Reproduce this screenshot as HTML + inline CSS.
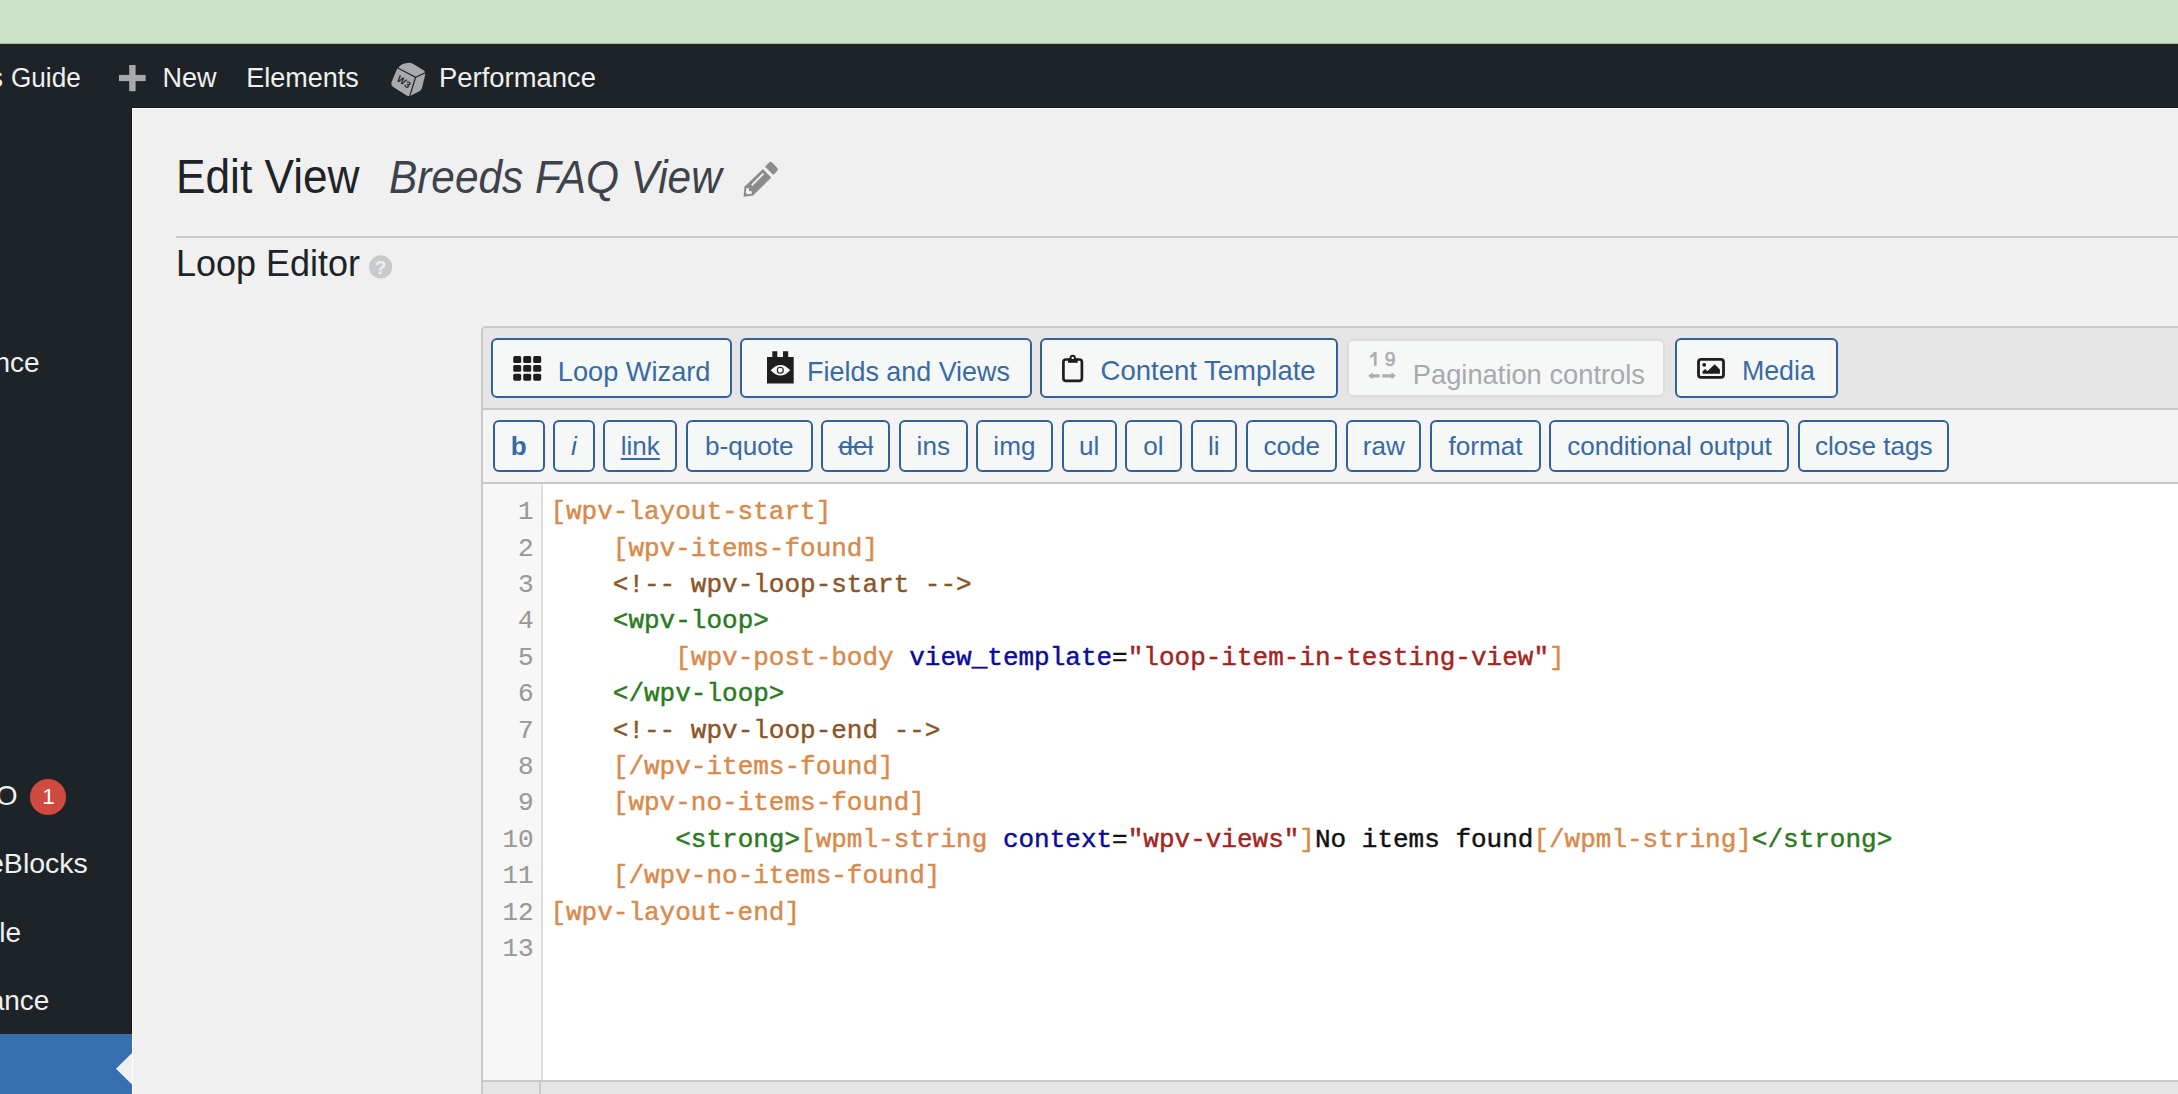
<!DOCTYPE html>
<html><head><meta charset="utf-8">
<style>
html,body{margin:0;padding:0}
body{width:2178px;height:1094px;overflow:hidden;position:relative;background:#f0f0f1;font-family:"Liberation Sans",sans-serif}
.a{position:absolute}
.t{position:absolute;white-space:pre;line-height:1}
.btn{position:absolute;box-sizing:border-box;border:2px solid #33609a;border-radius:6px;background:#f6f7f7}
.dis{border-color:#dcdcde;background:#f6f7f7}
.code{font-family:"Liberation Mono",monospace}
.o{color:#d88a4b}.c{color:#8a5628}.g{color:#2b7a1f}.b{color:#0b0b99}.s{color:#a3241f}.k{color:#111}
</style></head>
<body>

<div class="a" style="left:0;top:0;width:2178px;height:43px;background:#c9e1c5"></div>
<div class="a" style="left:0;top:43px;width:2178px;height:1px;background:#a8bfa4"></div>
<div class="a" style="left:0;top:44px;width:2178px;height:64px;background:#1d2327"></div>
<div class="a" style="left:0;top:108px;width:132px;height:986px;background:#1d2327"></div>
<div class="a" style="left:0;top:1034px;width:132px;height:60px;background:#386fb0"></div>
<div class="a" style="left:131px;top:107px;width:2047px;height:1px;background:#141719"></div>
<div class="a" style="left:131px;top:107px;width:1px;height:927px;background:#141719"></div>
<div class="a" style="left:132px;top:108px;width:2046px;height:1px;background:#fdfdfd"></div>
<div class="a" style="left:132px;top:108px;width:1px;height:986px;background:#fdfdfd"></div>
<svg class="a" style="left:116px;top:1052px" width="16" height="34" viewBox="0 0 16 34"><polygon points="16.5,0.5 0,16.7 16.5,33" fill="#f0f0f1"/></svg>
<div class="t" style="left:-10.50px;top:64.75px;font-size:27px;color:#f0f0f1;">s</div>
<div class="t" style="left:10.60px;top:64.75px;font-size:27px;color:#f0f0f1;transform:scaleX(0.967);transform-origin:0 0;">Guide</div>
<svg class="a" style="left:119px;top:65px" width="27" height="27" viewBox="0 0 27 27"><rect x="10.2" y="0" width="6.4" height="26.2" fill="#a7aaad"/><rect x="0" y="9.9" width="26.6" height="6.2" fill="#a7aaad"/></svg>
<div class="t" style="left:162.60px;top:64.75px;font-size:27px;color:#f0f0f1;">New</div>
<div class="t" style="left:246.30px;top:64.75px;font-size:27px;color:#f0f0f1;">Elements</div>
<svg class="a" style="left:385px;top:58px" width="45" height="42" viewBox="0 0 45 42">
<path d="M14 9 Q16 6.5 19.5 5.6 L23.5 4.8 Q25.5 4.6 27.5 5.6 L38.5 12.2 Q40.8 13.8 40.2 16.5 L37 30 Q36.3 32.3 34 33.4 L26 37.6 Q23.8 38.6 21.6 37.4 L8.6 29.2 Q5.8 27.4 6.4 24.6 L11.4 12.4 Q12.2 10.4 14 9 Z" fill="#a7aaad"/>
<path d="M12.8 10 L30.6 19.3 L40.3 14.8 M30.6 19.3 L24.8 37.9" stroke="#1d2327" stroke-width="1.2" fill="none"/>
<text x="0" y="0" font-family="Liberation Sans" font-weight="bold" font-size="9.6" fill="#1d2327" transform="translate(10.9,22.6) rotate(34)">W3</text>
</svg>
<div class="t" style="left:439.00px;top:64.75px;font-size:27px;color:#f0f0f1;transform:scaleX(1.015);transform-origin:0 0;">Performance</div>
<div class="t" style="right:2138.30px;top:349.20px;font-size:28px;color:#f0f0f1;">nce</div>
<div class="t" style="right:2160.40px;top:782.00px;font-size:28px;color:#f0f0f1;">O</div>
<div class="a" style="left:29.7px;top:778.8px;width:36.3px;height:36.3px;border-radius:50%;background:#cf4a3f"></div>
<div class="t" style="left:42.30px;top:785.67px;font-size:22.5px;color:#fff;">1</div>
<div class="t" style="right:2090.20px;top:849.37px;font-size:28.5px;color:#f0f0f1;">eBlocks</div>
<div class="t" style="right:2157.00px;top:919.00px;font-size:28px;color:#f0f0f1;">le</div>
<div class="t" style="right:2128.60px;top:987.00px;font-size:28px;color:#f0f0f1;">ance</div>
<div class="t" style="left:175.60px;top:153.00px;font-size:48px;color:#1d2327;transform:scaleX(0.921);transform-origin:0 0;">Edit View</div>
<div class="t" style="left:388.90px;top:154.67px;font-size:45.8px;color:#3c434a;transform:scaleX(0.925);transform-origin:0 0;font-style:italic;">Breeds FAQ View</div>
<svg class="a" style="left:738px;top:157px" width="45" height="45" viewBox="0 0 45 45">
<path d="M27.1 9.7 L31.2 5.3 Q32.5 4.2 33.8 5.3 L39.4 11 Q40.5 12.3 39.4 13.6 L35.4 17.9 Z" fill="#8c8c8c"/>
<path d="M24.9 11.9 L33.3 20.4 L15.2 38.5 L5.6 39.8 L6.4 29.8 Z" fill="#8c8c8c"/>
<path d="M13.8 28.4 L25.3 16.7" stroke="#f0f0f1" stroke-width="1.9"/>
<path d="M8.4 30.9 L10.9 31.2 L11.1 33.9 L13.8 34.3 L14 36.6 L9.6 37.4 L7.7 35.4 Z" fill="#f0f0f1"/>
</svg>
<div class="a" style="left:176px;top:236px;width:2002px;height:2px;background:#c8c9cb"></div>
<div class="t" style="left:175.50px;top:244.91px;font-size:37.4px;color:#1d2327;transform:scaleX(0.9615);transform-origin:0 0;">Loop Editor</div>
<svg class="a" style="left:368px;top:254px" width="26" height="26" viewBox="0 0 26 26"><circle cx="12.6" cy="12.9" r="11.6" fill="#c9cacc"/><text x="12.6" y="20" text-anchor="middle" font-family="Liberation Sans" font-weight="bold" font-size="19" fill="#f0f0f1">?</text></svg>
<div class="a" style="left:481px;top:326px;width:1760px;height:820px;box-sizing:border-box;border:2px solid #c9c9c9;border-radius:5px;background:#fff"></div>
<div class="a" style="left:483px;top:328px;width:1700px;height:80px;background:#e5e5e5;border-top-left-radius:3px"></div>
<div class="a" style="left:483px;top:408px;width:1700px;height:2px;background:#c9c9c9"></div>
<div class="a" style="left:483px;top:410px;width:1700px;height:72px;background:#f4f4f4"></div>
<div class="a" style="left:483px;top:482px;width:1700px;height:2px;background:#c9c9c9"></div>
<div class="a" style="left:483px;top:484px;width:58px;height:596px;background:#f7f7f7"></div>
<div class="a" style="left:541px;top:484px;width:2px;height:596px;background:#dddddd"></div>
<div class="a" style="left:483px;top:1080px;width:1700px;height:2px;background:#c9c9c9"></div>
<div class="a" style="left:483px;top:1082px;width:1700px;height:12px;background:#e5e5e5"></div>
<div class="a" style="left:539px;top:1082px;width:2px;height:12px;background:#c9c9c9"></div>
<div class="btn" style="left:491.0px;top:338.0px;width:240.5px;height:59.7px"></div>
<div class="btn" style="left:739.7px;top:338.0px;width:292.1px;height:59.7px"></div>
<div class="btn" style="left:1040.1px;top:338.0px;width:297.8px;height:59.7px"></div>
<div class="btn dis" style="left:1347.0px;top:339.2px;width:318.4px;height:57.5px"></div>
<div class="btn" style="left:1675.3px;top:338.0px;width:162.3px;height:59.7px"></div>
<svg class="a" style="left:513px;top:356px" width="30" height="26" viewBox="0 0 30 26"><rect x="0.2" y="0.10" width="8" height="6.9" rx="1.6" fill="#1e1e1e"/><rect x="0.2" y="8.95" width="8" height="6.9" rx="1.6" fill="#1e1e1e"/><rect x="0.2" y="17.80" width="8" height="6.9" rx="1.6" fill="#1e1e1e"/><rect x="10.2" y="0.10" width="8" height="6.9" rx="1.6" fill="#1e1e1e"/><rect x="10.2" y="8.95" width="8" height="6.9" rx="1.6" fill="#1e1e1e"/><rect x="10.2" y="17.80" width="8" height="6.9" rx="1.6" fill="#1e1e1e"/><rect x="20.2" y="0.10" width="8" height="6.9" rx="1.6" fill="#1e1e1e"/><rect x="20.2" y="8.95" width="8" height="6.9" rx="1.6" fill="#1e1e1e"/><rect x="20.2" y="17.80" width="8" height="6.9" rx="1.6" fill="#1e1e1e"/></svg>
<svg class="a" style="left:760px;top:345px" width="40" height="45" viewBox="0 0 40 45">
<path d="M7 11.9 H12.3 V6.2 H17.3 V11.9 H23 V6.2 H28.2 V11.9 H33.7 V38.5 H7 Z" fill="#1e1e1e"/>
<path d="M10.7 25.3 Q20.5 14.8 30.2 25.3 Q20.5 35.8 10.7 25.3 Z" fill="#f6f7f7"/>
<circle cx="20.3" cy="25.3" r="3" fill="none" stroke="#1e1e1e" stroke-width="1.1"/>
</svg>
<svg class="a" style="left:1055px;top:348px" width="35" height="40" viewBox="0 0 35 40">
<rect x="8.4" y="11.5" width="18.5" height="21.4" rx="2.6" fill="none" stroke="#1e1e1e" stroke-width="2.7"/>
<rect x="13" y="10.5" width="9.7" height="4.3" fill="#1e1e1e"/>
<circle cx="17.7" cy="9.9" r="3.1" fill="#1e1e1e"/>
<circle cx="17.7" cy="9.9" r="1.2" fill="#f6f7f7"/>
</svg>
<svg class="a" style="left:1360px;top:345px" width="45" height="43" viewBox="0 0 45 43">
<path d="M13.9 7.1 H16.6 V20.8 H13.9 V10.9 Q12 12.4 10 13 V10.6 Q12.6 9.6 13.9 7.1 Z" fill="#abaeb1"/>
<text x="24.8" y="20.8" font-family="Liberation Sans" font-size="19.5" fill="#abaeb1" stroke="#abaeb1" stroke-width="0.6">9</text>
<path d="M8.3 30.8 L12.6 27.3 L12.6 29.2 H19.7 V32.4 H12.6 V34.3 Z M35.8 30.8 L31.5 27.3 L31.5 29.2 H22.2 V32.4 H31.5 V34.3 Z" fill="#abaeb1"/>
</svg>
<svg class="a" style="left:1690px;top:350px" width="45" height="38" viewBox="0 0 45 38">
<rect x="8.5" y="9.4" width="25" height="18" rx="2.6" fill="none" stroke="#1e1e1e" stroke-width="2.8"/>
<circle cx="14.2" cy="14.8" r="1.9" fill="#1e1e1e"/>
<path d="M12.5 23.8 L12.6 21.2 L15.3 19.1 L17.4 21.2 L24.7 14.2 L29.9 19.4 L29.9 23.8 Z" fill="#1e1e1e"/>
</svg>
<div class="t" style="left:557.80px;top:357.68px;font-size:27.2px;color:#386aa5;">Loop Wizard</div>
<div class="t" style="left:807.10px;top:358.83px;font-size:26.9px;color:#386aa5;">Fields and Views</div>
<div class="t" style="left:1100.60px;top:357.12px;font-size:27.5px;color:#386aa5;">Content Template</div>
<div class="t" style="left:1412.80px;top:360.50px;font-size:27.3px;color:#a7aaad;">Pagination controls</div>
<div class="t" style="left:1741.90px;top:358.02px;font-size:26.8px;color:#386aa5;">Media</div>
<div class="btn" style="left:493.1px;top:420.0px;width:51.5px;height:51.7px"></div>
<div class="t" style="left:493.1px;width:51.5px;text-align:center;top:433.01px;font-size:26.1px;color:#386aa5;font-weight:bold;">b</div>
<div class="btn" style="left:553.2px;top:420.0px;width:41.4px;height:51.7px"></div>
<div class="t" style="left:553.2px;width:41.4px;text-align:center;top:433.01px;font-size:26.1px;color:#386aa5;font-style:italic;">i</div>
<div class="btn" style="left:603.2px;top:420.0px;width:74.2px;height:51.7px"></div>
<div class="t" style="left:603.2px;width:74.2px;text-align:center;top:433.01px;font-size:26.1px;color:#386aa5;text-decoration:underline;text-decoration-thickness:2px;text-underline-offset:3px;">link</div>
<div class="btn" style="left:686.1px;top:420.0px;width:126.5px;height:51.7px"></div>
<div class="t" style="left:686.1px;width:126.5px;text-align:center;top:433.01px;font-size:26.1px;color:#386aa5;">b-quote</div>
<div class="btn" style="left:821.4px;top:420.0px;width:68.9px;height:51.7px"></div>
<div class="t" style="left:821.4px;width:68.9px;text-align:center;top:433.01px;font-size:26.1px;color:#386aa5;text-decoration:line-through;text-decoration-thickness:2px;">del</div>
<div class="btn" style="left:899.0px;top:420.0px;width:68.6px;height:51.7px"></div>
<div class="t" style="left:899.0px;width:68.6px;text-align:center;top:433.01px;font-size:26.1px;color:#386aa5;">ins</div>
<div class="btn" style="left:976.2px;top:420.0px;width:76.4px;height:51.7px"></div>
<div class="t" style="left:976.2px;width:76.4px;text-align:center;top:433.01px;font-size:26.1px;color:#386aa5;">img</div>
<div class="btn" style="left:1061.6px;top:420.0px;width:55.0px;height:51.7px"></div>
<div class="t" style="left:1061.6px;width:55.0px;text-align:center;top:433.01px;font-size:26.1px;color:#386aa5;">ul</div>
<div class="btn" style="left:1125.2px;top:420.0px;width:56.4px;height:51.7px"></div>
<div class="t" style="left:1125.2px;width:56.4px;text-align:center;top:433.01px;font-size:26.1px;color:#386aa5;">ol</div>
<div class="btn" style="left:1190.6px;top:420.0px;width:46.5px;height:51.7px"></div>
<div class="t" style="left:1190.6px;width:46.5px;text-align:center;top:433.01px;font-size:26.1px;color:#386aa5;">li</div>
<div class="btn" style="left:1246.0px;top:420.0px;width:91.4px;height:51.7px"></div>
<div class="t" style="left:1246.0px;width:91.4px;text-align:center;top:433.01px;font-size:26.1px;color:#386aa5;">code</div>
<div class="btn" style="left:1346.3px;top:420.0px;width:75.2px;height:51.7px"></div>
<div class="t" style="left:1346.3px;width:75.2px;text-align:center;top:433.01px;font-size:26.1px;color:#386aa5;">raw</div>
<div class="btn" style="left:1430.4px;top:420.0px;width:110.4px;height:51.7px"></div>
<div class="t" style="left:1430.4px;width:110.4px;text-align:center;top:433.01px;font-size:26.1px;color:#386aa5;">format</div>
<div class="btn" style="left:1549.4px;top:420.0px;width:240.1px;height:51.7px"></div>
<div class="t" style="left:1549.4px;width:240.1px;text-align:center;top:433.01px;font-size:26.1px;color:#386aa5;">conditional output</div>
<div class="btn" style="left:1798.1px;top:420.0px;width:151.3px;height:51.7px"></div>
<div class="t" style="left:1798.1px;width:151.3px;text-align:center;top:433.01px;font-size:26.1px;color:#386aa5;">close tags</div>
<div class="t code" style="right:1644.3px;top:499.14px;font-size:26px;color:#999;-webkit-text-stroke:0.15px #999">1</div>
<div class="t code" style="left:550.4px;top:499.14px;font-size:26px;-webkit-text-stroke:0.45px currentColor;"><span class="o">[wpv-layout-start]</span></div>
<div class="t code" style="right:1644.3px;top:535.54px;font-size:26px;color:#999;-webkit-text-stroke:0.15px #999">2</div>
<div class="t code" style="left:550.4px;top:535.54px;font-size:26px;-webkit-text-stroke:0.45px currentColor;">    <span class="o">[wpv-items-found]</span></div>
<div class="t code" style="right:1644.3px;top:571.94px;font-size:26px;color:#999;-webkit-text-stroke:0.15px #999">3</div>
<div class="t code" style="left:550.4px;top:571.94px;font-size:26px;-webkit-text-stroke:0.45px currentColor;">    <span class="c">&lt;!-- wpv-loop-start --&gt;</span></div>
<div class="t code" style="right:1644.3px;top:608.34px;font-size:26px;color:#999;-webkit-text-stroke:0.15px #999">4</div>
<div class="t code" style="left:550.4px;top:608.34px;font-size:26px;-webkit-text-stroke:0.45px currentColor;">    <span class="g">&lt;wpv-loop&gt;</span></div>
<div class="t code" style="right:1644.3px;top:644.74px;font-size:26px;color:#999;-webkit-text-stroke:0.15px #999">5</div>
<div class="t code" style="left:550.4px;top:644.74px;font-size:26px;-webkit-text-stroke:0.45px currentColor;">        <span class="o">[wpv-post-body </span><span class="b">view_template</span><span class="k">=</span><span class="s">"loop-item-in-testing-view"</span><span class="o">]</span></div>
<div class="t code" style="right:1644.3px;top:681.14px;font-size:26px;color:#999;-webkit-text-stroke:0.15px #999">6</div>
<div class="t code" style="left:550.4px;top:681.14px;font-size:26px;-webkit-text-stroke:0.45px currentColor;">    <span class="g">&lt;/wpv-loop&gt;</span></div>
<div class="t code" style="right:1644.3px;top:717.54px;font-size:26px;color:#999;-webkit-text-stroke:0.15px #999">7</div>
<div class="t code" style="left:550.4px;top:717.54px;font-size:26px;-webkit-text-stroke:0.45px currentColor;">    <span class="c">&lt;!-- wpv-loop-end --&gt;</span></div>
<div class="t code" style="right:1644.3px;top:753.94px;font-size:26px;color:#999;-webkit-text-stroke:0.15px #999">8</div>
<div class="t code" style="left:550.4px;top:753.94px;font-size:26px;-webkit-text-stroke:0.45px currentColor;">    <span class="o">[/wpv-items-found]</span></div>
<div class="t code" style="right:1644.3px;top:790.34px;font-size:26px;color:#999;-webkit-text-stroke:0.15px #999">9</div>
<div class="t code" style="left:550.4px;top:790.34px;font-size:26px;-webkit-text-stroke:0.45px currentColor;">    <span class="o">[wpv-no-items-found]</span></div>
<div class="t code" style="right:1644.3px;top:826.74px;font-size:26px;color:#999;-webkit-text-stroke:0.15px #999">10</div>
<div class="t code" style="left:550.4px;top:826.74px;font-size:26px;-webkit-text-stroke:0.45px currentColor;">        <span class="g">&lt;strong&gt;</span><span class="o">[wpml-string </span><span class="b">context</span><span class="k">=</span><span class="s">"wpv-views"</span><span class="o">]</span><span class="k">No items found</span><span class="o">[/wpml-string]</span><span class="g">&lt;/strong&gt;</span></div>
<div class="t code" style="right:1644.3px;top:863.14px;font-size:26px;color:#999;-webkit-text-stroke:0.15px #999">11</div>
<div class="t code" style="left:550.4px;top:863.14px;font-size:26px;-webkit-text-stroke:0.45px currentColor;">    <span class="o">[/wpv-no-items-found]</span></div>
<div class="t code" style="right:1644.3px;top:899.54px;font-size:26px;color:#999;-webkit-text-stroke:0.15px #999">12</div>
<div class="t code" style="left:550.4px;top:899.54px;font-size:26px;-webkit-text-stroke:0.45px currentColor;"><span class="o">[wpv-layout-end]</span></div>
<div class="t code" style="right:1644.3px;top:935.94px;font-size:26px;color:#999;-webkit-text-stroke:0.15px #999">13</div>
</body></html>
